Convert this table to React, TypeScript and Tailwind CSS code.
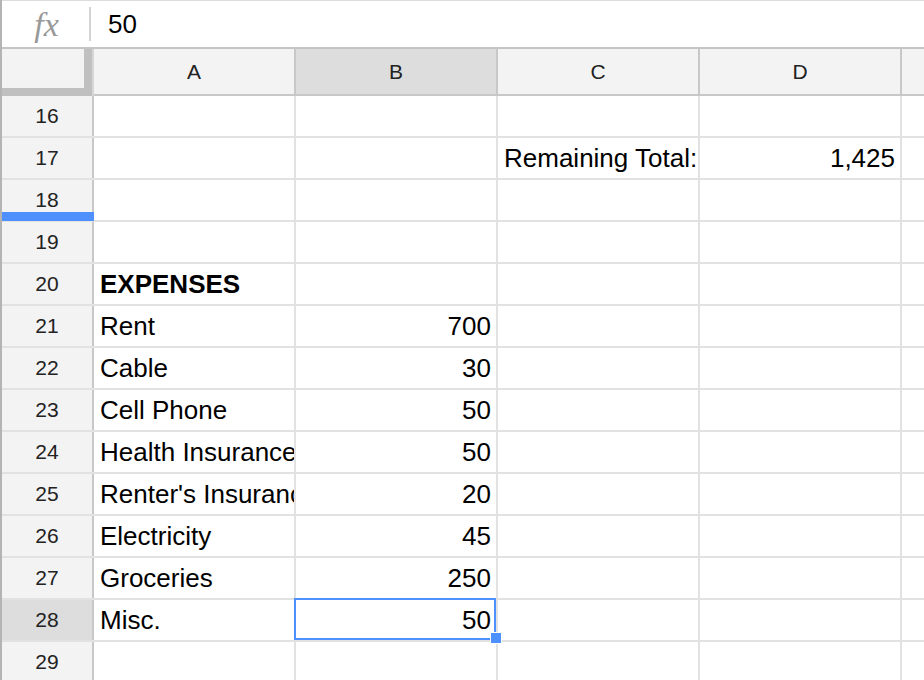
type Row = {
  n: number;
  a?: string;
  b?: string;
  c?: string;
  d?: string;
  bold?: boolean;
};

const rows: Row[] = [
  { n: 16 },
  { n: 17, c: "Remaining Total:", d: "1,425" },
  { n: 18 },
  { n: 19 },
  { n: 20, a: "EXPENSES", bold: true },
  { n: 21, a: "Rent", b: "700" },
  { n: 22, a: "Cable", b: "30" },
  { n: 23, a: "Cell Phone", b: "50" },
  { n: 24, a: "Health Insurance", b: "50" },
  { n: 25, a: "Renter's Insurance", b: "20" },
  { n: 26, a: "Electricity", b: "45" },
  { n: 27, a: "Groceries", b: "250" },
  { n: 28, a: "Misc.", b: "50" },
  { n: 29 },
];

const cols = ["A", "B", "C", "D"];

const Cell = ({ text, right, bold }: { text?: string; right?: boolean; bold?: boolean }) => (
  <div
    className={`w-[202px] shrink-0 h-full border-r-2 border-[#e2e2e2] flex items-center overflow-hidden whitespace-nowrap pl-[6px] pr-[5px] text-[26px] text-black ${
      right ? "justify-end" : ""
    } ${bold ? "font-bold" : ""}`}
  >
    {text}
  </div>
);

const App = () => {
  return (
    <div className="w-[924px] h-[680px] overflow-hidden bg-white border-l-2 border-[#b4b4b4] [font-family:'Liberation_Sans',Arial,sans-serif] relative">
      {/* formula bar */}
      <div className="h-[49px] border-t border-[#dcdcdc] border-b-2 border-b-[#c4c4c4] flex items-center">
        <div className="w-[87px] flex justify-center pl-[2px] pt-[2px]">
          <span className="[font-family:'Liberation_Serif','DejaVu_Serif',serif] italic text-[34px] text-[#999999] leading-none">
            fx
          </span>
        </div>
        <div className="w-[2px] h-[34px] bg-[#d4d4d4]" />
        <div className="pl-[17px] text-[26px] text-black">50</div>
      </div>

      {/* column headers */}
      <div className="flex h-[47px]">
        <div className="w-[90px] shrink-0 flex flex-col">
          <div className="flex flex-1">
            <div className="flex-1 bg-[#f3f3f3]" />
            <div className="w-[8px] bg-[#c0c0c0]" />
          </div>
          <div className="h-[8px] bg-[#c0c0c0]" />
        </div>
        <div className="w-[2px] shrink-0 bg-[#d6d6d6]" />
        {cols.map((c) => (
          <div
            key={c}
            className={`w-[202px] shrink-0 border-r-2 border-b-2 border-[#c8c8c8] flex items-center justify-center text-[21px] text-[#222] ${
              c === "B" ? "bg-[#dddddd]" : "bg-[#f3f3f3]"
            }`}
          >
            {c}
          </div>
        ))}
        <div className="flex-1 bg-[#f3f3f3] border-b-2 border-[#c8c8c8]" />
      </div>

      {/* rows */}
      {rows.map((r) => (
        <div key={r.n} className="flex h-[42px] border-b-2 border-[#e2e2e2]">
          <div
            className={`relative w-[92px] shrink-0 h-full border-r-2 border-[#c8c8c8] flex items-center justify-center text-[21px] text-[#222] ${
              r.n === 28 ? "bg-[#dddddd]" : "bg-[#f3f3f3]"
            }`}
          >
            {r.n}
            {r.n === 18 && (
              <div className="absolute left-0 right-[-2px] bottom-[-1px] h-[9px] bg-[#4d90fe]" />
            )}
          </div>
          <Cell text={r.a} bold={r.bold} />
          <Cell text={r.b} right />
          <Cell text={r.c} />
          <Cell text={r.d} right />
          <div className="flex-1" />
        </div>
      ))}

      {/* selected cell B28 */}
      <div className="absolute left-[292px] top-[598px] w-[202px] h-[42px] border-2 border-[#4d90fe]" />
      <div className="absolute left-[488px] top-[632px] w-[12px] h-[12px] bg-[#4d90fe] border border-white" />
    </div>
  );
};

export default App;
